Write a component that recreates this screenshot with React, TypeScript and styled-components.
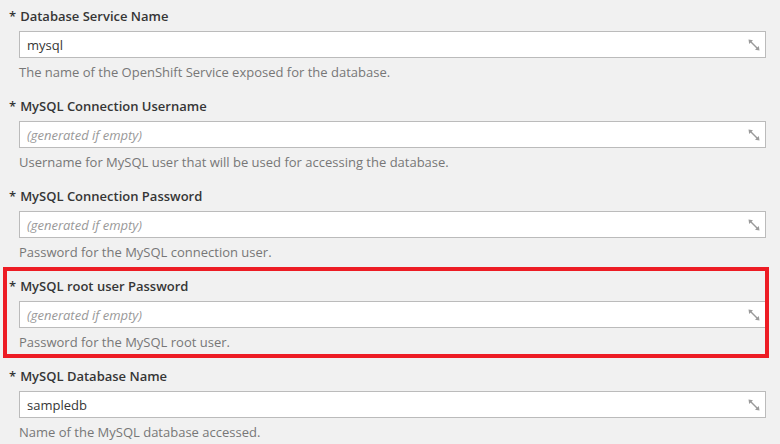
import styled, { createGlobalStyle } from "styled-components";

interface FieldData {
  label: string;
  value?: string;
  placeholder?: string;
  help: string;
  highlight?: boolean;
}

const fields: FieldData[] = [
  {
    label: "Database Service Name",
    value: "mysql",
    help: "The name of the OpenShift Service exposed for the database.",
  },
  {
    label: "MySQL Connection Username",
    placeholder: "(generated if empty)",
    help: "Username for MySQL user that will be used for accessing the database.",
  },
  {
    label: "MySQL Connection Password",
    placeholder: "(generated if empty)",
    help: "Password for the MySQL connection user.",
  },
  {
    label: "MySQL root user Password",
    placeholder: "(generated if empty)",
    help: "Password for the MySQL root user.",
    highlight: true,
  },
  {
    label: "MySQL Database Name",
    value: "sampledb",
    help: "Name of the MySQL database accessed.",
  },
];

const ResizeIcon = () => (
  <svg width="12" height="12" viewBox="0 0 12 12">
    <line x1="2.5" y1="2.5" x2="9.5" y2="9.5" stroke="#9a9a9a" strokeWidth="1.4" />
    <polygon points="0.5,0.5 5,1.2 1.2,5" fill="#9a9a9a" />
    <polygon points="11.5,11.5 7,10.8 10.8,7" fill="#9a9a9a" />
  </svg>
);

const App = () => {
  return (
    <>
      <GlobalStyle />
      <Page>
        {fields.map((f, i) => (
          <Field key={i} $highlight={f.highlight}>
            <Label>
              <Req>*</Req>
              {f.label}
            </Label>
            <InputWrap>
              <Input defaultValue={f.value} placeholder={f.placeholder} />
              <IconSlot>
                <ResizeIcon />
              </IconSlot>
            </InputWrap>
            <Help>{f.help}</Help>
          </Field>
        ))}
      </Page>
    </>
  );
};

export default App;

const GlobalStyle = createGlobalStyle`
  html, body {
    margin: 0;
    padding: 0;
    background: #f1f1f1;
  }
  body {
    font-family: "Open Sans", "Noto Sans", "Liberation Sans", sans-serif;
    color: #363636;
  }
`;

const Page = styled("div")`
  width: 780px;
  height: 444px;
  overflow: hidden;
  box-sizing: border-box;
  padding: 7px 14px 0 9px;
  background: #f1f1f1;
`;

const Field = styled("div")<{ $highlight?: boolean }>`
  position: relative;
  margin-bottom: 16px;

  &::after {
    content: "";
    display: ${(p) => (p.$highlight ? "block" : "none")};
    position: absolute;
    left: -6px;
    right: -3px;
    top: -10px;
    bottom: -7px;
    border: 4px solid #ed1c24;
    pointer-events: none;
  }
`;

const Label = styled("div")`
  font-size: 13px;
  font-weight: 600;
  line-height: 18px;
  color: #363636;
  margin-bottom: 6px;
`;

const Req = styled("span")`
  margin-right: 4px;
`;

const InputWrap = styled("div")`
  position: relative;
  margin-left: 10px;
  height: 27px;
`;

const Input = styled("input")`
  box-sizing: border-box;
  width: 100%;
  height: 27px;
  border: 1px solid #bbb;
  background: #fff;
  padding: 0 28px 0 7px;
  font-family: "Open Sans", "Noto Sans", "Liberation Sans", sans-serif;
  font-size: 13px;
  color: #363636;
  outline: none;

  &::placeholder {
    font-style: italic;
    color: #999;
  }
`;

const IconSlot = styled("span")`
  position: absolute;
  right: 6px;
  top: 8px;
  width: 12px;
  height: 12px;
  display: flex;
`;

const Help = styled("div")`
  margin-top: 5px;
  margin-left: 10px;
  font-size: 13px;
  line-height: 18px;
  color: #777;
`;
